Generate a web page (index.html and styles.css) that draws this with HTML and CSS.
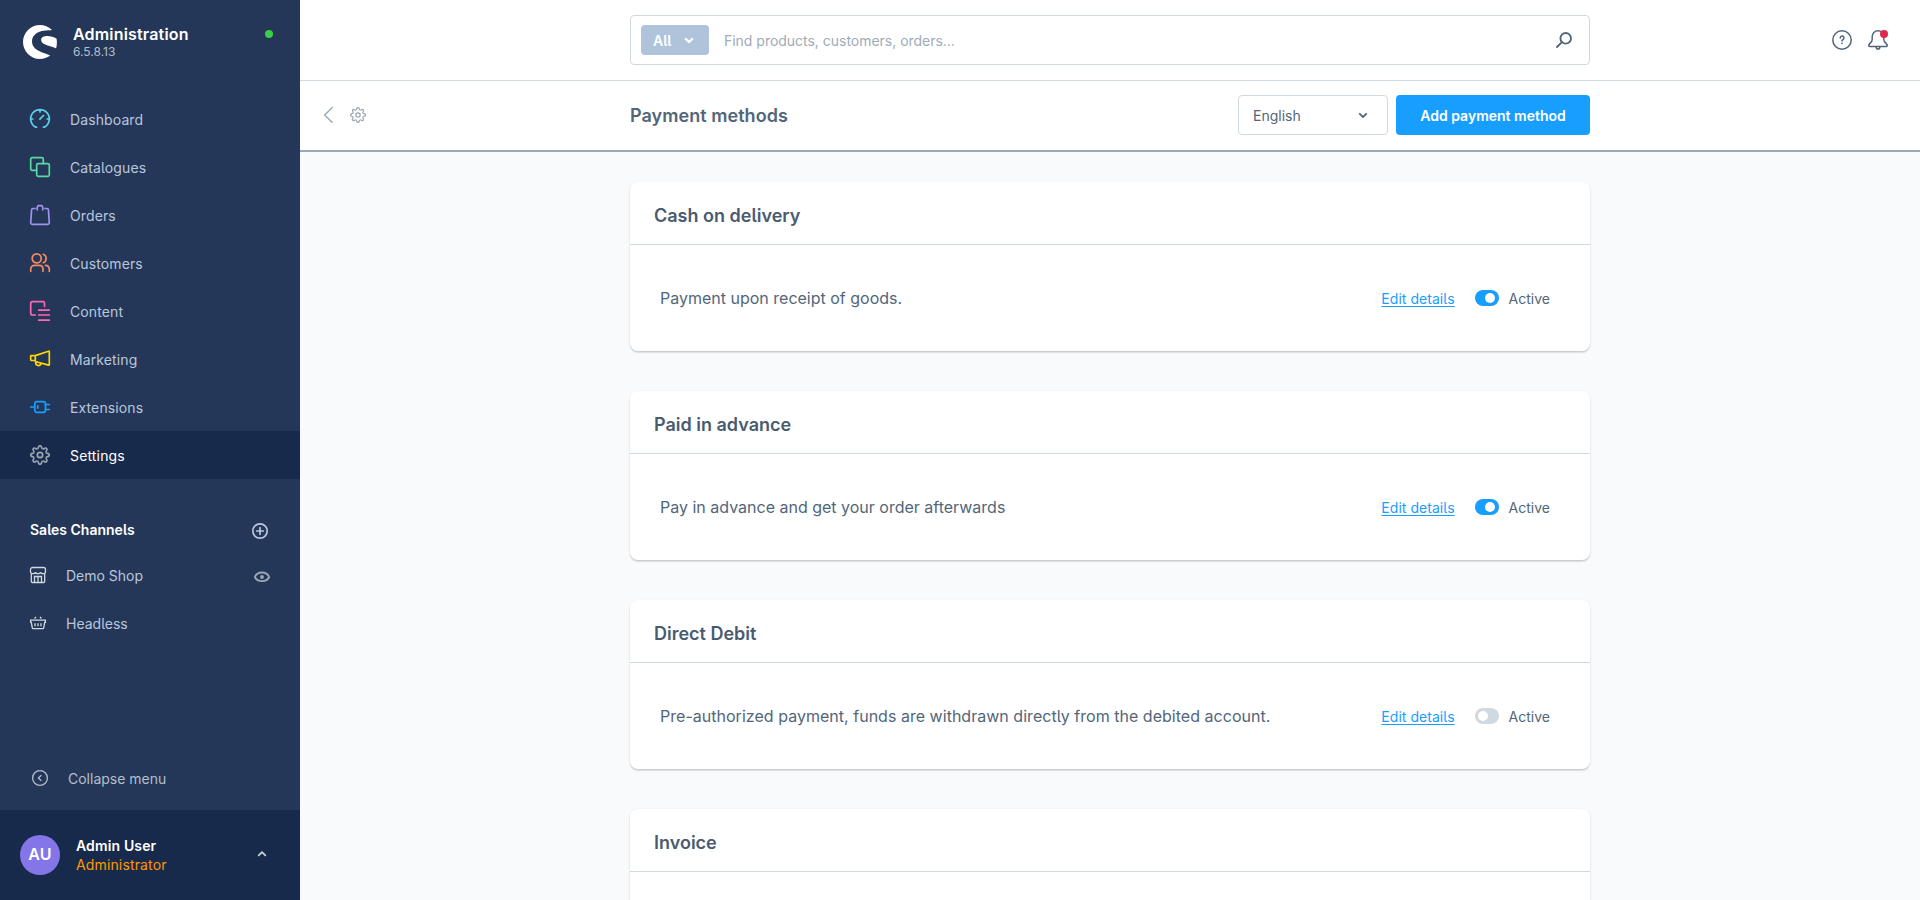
FILE: index.html
```html
<!DOCTYPE html>
<html lang="en">
<head>
<meta charset="utf-8">
<title>Payment methods</title>
<link rel="stylesheet" href="styles.css">
</head>
<body>
<svg class="defs" aria-hidden="true">
  <defs>
    <path id="tooth" d="M-3.14-7.58Q-2.1-7.7-1.9-9.1Q-1.6-11.1 0-11.1Q1.6-11.1 1.9-9.1Q2.1-7.7 3.14-7.58"/>
    <symbol id="gear" viewBox="-12 -12 24 24">
      <g fill="none" stroke="currentColor" stroke-linejoin="round">
        <use href="#tooth"/><use href="#tooth" transform="rotate(45)"/><use href="#tooth" transform="rotate(90)"/><use href="#tooth" transform="rotate(135)"/>
        <use href="#tooth" transform="rotate(180)"/><use href="#tooth" transform="rotate(225)"/><use href="#tooth" transform="rotate(270)"/><use href="#tooth" transform="rotate(315)"/>
        <circle r="3.2"/>
      </g>
    </symbol>
  </defs>
</svg>
<div class="app">
  <aside class="sidebar">
    <header class="brand">
      <svg class="logo" viewBox="0 0 34 34"><path d="M28.5 4.6C25.5 1.700 21.500 0 17 0C7.600 0 0 7.600 0 17s7.600 17 17 17c3.700 0 7.100-1.200 9.900-3.200c.2-.2.1-.5-.1-.6C21 27.900 9 25.500 9 16.500C9 9 16 4.600 28.200 5.200c.4 0 .6-.3.3-.6z"/><path d="M33.600 13.700C30.500 11.300 25.900 10.700 23 11c-3.300.3-4.900 1.900-4.900 3.800c0 5.200 8.900 5.800 14.600 8.500c.3.100.4 0 .5-.2c.6-2 1-6.500.4-9.400z"/></svg>
      <div class="brand-text"><div class="brand-name">Administration</div><div class="version">6.5.8.13</div></div>
      <span class="online"></span>
    </header>
    <nav class="menu">
      <a class="item"><svg viewBox="0 0 20 20" class="icon cyan"><path d="M6.500 18.200H5.800A9.300 9.300 0 1 1 14.200 18.200H13.500M10 1v2M1 10h1.800M17.200 10H19M9.900 10.100l3.600-3.600"/></svg>Dashboard</a>
      <a class="item"><svg viewBox="0 0 20 20" class="icon green"><rect x="6.700" y="6.700" width="12.600" height="12.600" rx="1.500"/><path d="M6.500 13.300H2.200A1.500 1.500 0 0 1 .7 11.800V2.200A1.500 1.500 0 0 1 2.200.7h9.600a1.500 1.500 0 0 1 1.500 1.500V6.500"/></svg>Catalogues</a>
      <a class="item"><svg viewBox="0 0 20 20" class="icon violet"><path d="M5 3.500H3A1.300 1.300 0 0 0 1.600 4.800L.7 17.600a1.500 1.500 0 0 0 1.500 1.700h15.600a1.500 1.500 0 0 0 1.500-1.700L18.400 4.800A1.300 1.300 0 0 0 17 3.500H15M7.200 4.800V3.200A1.400 2.500 0 0 1 8.600.7h2.800a1.400 2.500 0 0 1 1.400 2.500V4.800"/></svg>Orders</a>
      <a class="item"><svg viewBox="0 0 20 20" class="icon orange"><circle cx="6.700" cy="5.400" r="4.500"/><path d="M.7 18.300V16a3.800 3.800 0 0 1 3.800-3.700h4.800A3.800 3.800 0 0 1 13 16v2.300M13.300 1.300a4.500 4.500 0 0 1 0 8.400M15.500 12.400a4 4 0 0 1 3.800 3.800v2.100"/></svg>Customers</a>
      <a class="item"><svg viewBox="0 0 20 20" class="icon pink"><path d="M5.200 14H2.200A1.500 1.500 0 0 1 .7 12.500V2.200A1.500 1.500 0 0 1 2.200.7h11A1.500 1.500 0 0 1 14.500 2.200V5.300M8.700 9.100h10.600M8.700 14h10.600M8.700 19.200h10.600"/></svg>Content</a>
      <a class="item"><svg viewBox="0 0 20 20" class="icon yellow"><path d="M5.300 6.600L18.500 2.200a.6.600 0 0 1 .8.600V15.500a.6.600 0 0 1-.8.600L5.300 12.500M5.300 6.600v5.900M5.300 6.600H1.300a.6.600 0 0 0-.6.600v3.600a.6.600 0 0 0 .6.600L5.300 11.500M5.800 12.700v.7a2.700 2.700 0 0 0 5.400.8"/></svg>Marketing</a>
      <a class="item"><svg viewBox="0 0 20 20" class="icon blue"><path d="M.7 10H4.700M7.800 8.900v2.200M15.500 7.500h3.800M15.500 12.500h3.800"/><rect x="4.800" y="4.600" width="10.700" height="10.800" rx="2.200"/></svg>Extensions</a>
      <a class="item active"><svg class="icon-gear"><use href="#gear"/></svg>Settings</a>
    </nav>
    <section class="channels">
      <div class="channels-head">Sales Channels<svg viewBox="0 0 16 16" class="plus"><circle cx="8" cy="8" r="7.200"/><path d="M8 4.700v6.600M4.700 8h6.600"/></svg></div>
      <a class="channel"><svg viewBox="0 0 16 16" class="ch-icon"><path d="M1.300 6.500V14.300a1.200 1.200 0 0 0 1.200 1.200h11a1.200 1.200 0 0 0 1.200-1.200V6.500M.5 5V2.500a2 2 0 0 1 2-2h11a2 2 0 0 1 2 2V5a2.500 1.700 0 0 1-5 0a2.500 1.700 0 0 1-5 0a2.500 1.700 0 0 1-5 0M4.500 15.500V9.500H11.500v6M8 9.500v6"/></svg>Demo Shop<svg viewBox="0 0 16 12" class="eye"><path d="M.8 6C3.500 0 12.500 0 15.200 6C12.500 11.500 3.500 11.500.8 6z"/><circle cx="8" cy="6" r="1"/></svg></a>
      <a class="channel"><svg viewBox="0 0 16 16" class="ch-icon"><path d="M.6 5.200h14.800v2.200h-.7l-1 5.500a1 1 0 0 1-1 .8H3.300a1 1 0 0 1-1-.8L1.300 7.400H.6zM4.600 3.500L6 1.800M11.400 3.500L10 1.800M5 8.200v3M8 8.200v3M11 8.200v3"/></svg>Headless</a>
    </section>
    <div class="collapse"><svg viewBox="0 0 16 16"><circle cx="8" cy="8" r="7.400"/><path d="M9.300 5.200L6.400 8l2.900 2.800"/></svg>Collapse menu</div>
    <footer class="user">
      <span class="avatar">AU</span>
      <div class="user-text"><div class="user-name">Admin User</div><div class="role">Administrator</div></div>
      <svg viewBox="0 0 10 6" class="up"><path d="M1.200 4.900L5 1.200l3.800 3.700"/></svg>
    </footer>
  </aside>
  <main class="main">
    <header class="topbar">
      <div class="search">
        <span class="scope">All<svg viewBox="0 0 10 7"><path d="M1.200 1.400L5 5l3.800-3.600"/></svg></span>
        <span class="placeholder">Find products, customers, orders...</span>
        <svg viewBox="0 0 16 16" class="lens"><circle cx="9.700" cy="6.300" r="5.300"/><path d="M5.900 10.100L1 15"/></svg>
      </div>
      <div class="tools">
        <svg viewBox="0 0 20 20"><circle cx="10" cy="10" r="9.200"/><path class="question" d="M8.200 8a1.900 1.900 0 1 1 3 1.500C10.400 10 10 10.300 10 11"/><circle class="dot" cx="10" cy="13.300" r=".9"/></svg>
        <span class="bell"><svg viewBox="0 0 20 20"><path d="M10 .8A5.800 5.800 0 0 0 4.200 6.600V9.500C4.200 12.500.7 13.500.7 15.600c0 .5.400.9.900.9h16.800c.5 0 .9-.4.9-.9c0-2.100-3.500-3.100-3.500-6.100V6.600A5.800 5.800 0 0 0 10 .8zM8.200 17.300a1.800 1.800 0 0 0 3.600 0"/></svg><i class="alert"></i></span>
      </div>
    </header>
    <header class="smartbar">
      <div class="back"><svg viewBox="0 0 9 16" class="left"><path d="M8.500.3L.7 8l7.800 7.700"/></svg><svg class="gear-sm"><use href="#gear"/></svg></div>
      <div class="smartbar-body">
        <h1>Payment methods</h1>
        <div class="select">English<svg viewBox="0 0 10 7"><path d="M1.200 1.400L5 5l3.800-3.600"/></svg></div>
        <button class="primary">Add payment method</button>
      </div>
    </header>
    <div class="content">
      <section class="card"><h2>Cash on delivery</h2><div class="card-body"><p>Payment upon receipt of goods.</p><a class="edit">Edit details</a><span class="switch on"></span><span class="state">Active</span></div></section>
      <section class="card"><h2>Paid in advance</h2><div class="card-body"><p>Pay in advance and get your order afterwards</p><a class="edit">Edit details</a><span class="switch on"></span><span class="state">Active</span></div></section>
      <section class="card"><h2>Direct Debit</h2><div class="card-body"><p class="wide">Pre-authorized payment, funds are withdrawn directly from the debited account.</p><a class="edit">Edit details</a><span class="switch"></span><span class="state">Active</span></div></section>
      <section class="card"><h2>Invoice</h2><div class="card-body"></div></section>
    </div>
  </main>
</div>
</body>
</html>
```
FILE: styles.css
```css
* { box-sizing: border-box; }
body { margin: 0; font-family: Inter, "Liberation Sans", sans-serif; font-size: 14px; font-feature-settings: "cv05"; color: #52667a; overflow: hidden; }
svg { flex: none; fill: none; stroke: currentColor; overflow: visible; }
.defs { display: none; }
.app { display: flex; height: 900px; overflow: hidden; }

.sidebar { width: 300px; flex: none; display: flex; flex-direction: column; background: #243758; color: #b3bfcc; }
.brand { height: 95px; display: flex; align-items: flex-start; padding: 25px 27px 0 23px; }
.logo { width: 34px; height: 34px; stroke: none; fill: #fff; }
.brand-text { margin-left: 16px; flex: 1; }
.brand-name { font-size: 16px; font-weight: 600; line-height: 18px; letter-spacing: .18px; color: #fff; }
.version { font-size: 12px; line-height: 18px; }
.online { width: 8px; height: 8px; border-radius: 50%; background: #37d046; margin-top: 5px; }
.item { display: flex; align-items: center; height: 48px; padding-left: 30px; gap: 20px; font-size: 14px; letter-spacing: .11px; color: #b9c7de; }
.icon { width: 20px; height: 20px; stroke-width: 1.7; stroke-linecap: round; stroke-linejoin: round; }
.icon-gear { width: 20px; height: 20px; stroke-width: 2; color: #9aa8b5; }
.cyan { color: #60cfea; }
.green { color: #57d9a3; }
.violet { color: #a092f0; }
.orange { color: #f88962; }
.pink { color: #ff68b4; }
.yellow { color: #ffd700; }
.blue { color: #189eff; }
.active { background: #182a4c; color: #fff; letter-spacing: .16px; }
.channels { padding-top: 29px; }
.channels-head { display: flex; align-items: center; justify-content: space-between; height: 43px; padding: 0 32px 0 30px; font-weight: 600; line-height: 21px; color: #fff; }
.plus { width: 16px; height: 16px; margin-top: 2px; color: #b9c7de; stroke-width: 1.7; stroke-linecap: round; }
.channel { display: flex; align-items: center; height: 48px; padding: 0 30px; color: #b9c7de; }
.ch-icon { width: 16px; height: 16px; margin-right: 20px; color: #d1d9e0; stroke-width: 1.3; }
.eye { width: 16px; height: 12px; margin: 3px 0 0 auto; color: #9aa8b5; stroke-width: 1.8; }
.collapse { margin-top: auto; height: 64px; display: flex; align-items: center; gap: 20px; padding-left: 32px; color: #b3bfcc; font-feature-settings: normal; }
.collapse svg { width: 16px; height: 16px; stroke-width: 1.3; }
.user { height: 90px; display: flex; align-items: center; padding: 0 33px 0 20px; background: #182a4c; }
.avatar { width: 40px; height: 40px; border-radius: 50%; background: #8475e8; color: #fff; font-size: 16px; font-weight: 600; line-height: 39px; letter-spacing: .3px; text-align: center; }
.user-text { flex: 1; margin-left: 16px; line-height: 19px; letter-spacing: .14px; }
.user-name { font-weight: 600; color: #fff; }
.role { color: #ff9800; }
.up { width: 10px; height: 6px; margin-top: -2px; color: #d1d9e0; stroke-width: 1.6; }

.main { flex: 1; display: flex; flex-direction: column; background: #f9fafc; }
.topbar { height: 81px; flex: none; display: flex; justify-content: flex-end; align-items: flex-start; padding: 15px 32px 0 0; background: #fff; border-bottom: 1px solid #d1d9e0; }
.search { width: 960px; height: 50px; display: flex; align-items: center; padding: 0 17px 0 10px; border: 1px solid #d1d9e0; border-radius: 4px; }
.scope { width: 68px; height: 30px; display: flex; align-items: center; justify-content: space-between; padding: 0 15px 0 12px; border-radius: 4px; background: #afc3db; color: #fff; font-weight: 600; }
.scope svg { width: 10px; height: 7px; stroke-width: 2.2; }
.placeholder { flex: 1; margin-left: 15px; letter-spacing: -.02px; color: #a0abb8; }
.lens { width: 16px; height: 16px; stroke-width: 1.9; stroke-linecap: round; color: #52667a; }
.tools { width: 298px; height: 50px; display: flex; justify-content: flex-end; align-items: center; gap: 16px; color: #52667a; }
.tools svg { display: block; width: 20px; height: 20px; stroke-width: 1.5; }
.question { stroke-width: 1.5; stroke-linecap: round; }
.dot { fill: currentColor; stroke: none; }
.bell { position: relative; }
.alert { position: absolute; right: 0; top: 0; width: 8px; height: 8px; border-radius: 50%; background: #de294c; }
.smartbar { height: 71px; flex: none; display: flex; background: #fff; border-bottom: 2px solid #9aa8b5; }
.back { width: 330px; display: flex; align-items: center; gap: 17px; padding: 0 0 1px 24px; color: #9aa8b5; }
.left { width: 9px; height: 16px; stroke-width: 1.4; }
.gear-sm { width: 16px; height: 16px; stroke-width: 1.9; }
.smartbar-body { width: 960px; display: flex; align-items: center; padding-bottom: 1px; }
h1 { flex: 1; margin: 0; font-size: 18px; font-weight: 600; letter-spacing: .05px; }
.select { width: 150px; height: 40px; display: flex; align-items: center; justify-content: space-between; padding: 0 19px 0 14px; border: 1px solid #d1d9e0; border-radius: 4px; font-feature-settings: normal; }
.select svg { width: 10px; height: 7px; stroke-width: 1.8; }
.primary { width: 194px; height: 40px; margin-left: 8px; padding: 0; border: 0; border-radius: 4px; background: #189eff; color: #fff; font: 600 14px Inter, "Liberation Sans", sans-serif; }
.content { flex: 1; display: flex; flex-direction: column; gap: 40px; padding: 30px 0 0 330px; overflow: hidden; }
.card { width: 960px; height: 169px; flex: none; background: #fff; border-radius: 8px; box-shadow: 0 1px 1px rgba(0,0,0,.08), 0 2px 1px rgba(0,0,0,.06), 0 1px 3px rgba(0,0,0,.1); }
h2 { height: 63px; margin: 0; padding: 2px 24px 0; border-bottom: 1px solid #d1d9e0; font-size: 18px; font-weight: 600; line-height: 64px; color: #4a5b70; }
.card-body { height: 106px; display: flex; align-items: center; padding: 0 40px 0 30px; }
p { flex: 1; margin: 0; font-size: 16px; }
.wide { letter-spacing: .025px; }
.edit { color: #189eff; letter-spacing: .04px; text-decoration: underline; text-decoration-thickness: 1px; text-underline-offset: 2px; text-decoration-skip-ink: none; }
.switch { width: 24px; height: 16px; margin: 0 10px 0 20px; padding: 3px; border-radius: 8px; background: #d1d9e0; }
.switch::before { content: ""; display: block; width: 10px; height: 10px; border-radius: 50%; background: #fff; }
.switch.on { background: #189eff; padding-left: 10px; }
```
